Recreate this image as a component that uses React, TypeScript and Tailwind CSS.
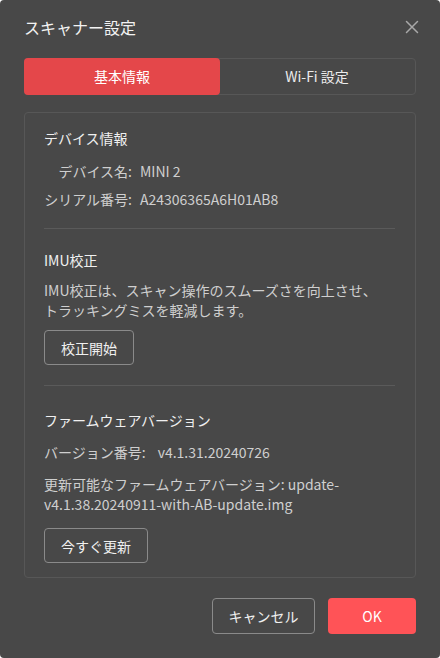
import React from "react";

const font = { fontFamily: '"Noto Sans CJK JP", "Noto Sans", sans-serif' };

export default function App() {
  return (
    <div className="w-[440px] h-[658px] bg-[#484848] rounded-[4px] overflow-hidden flex flex-col px-6" style={font}>
      <div className="h-[52px] flex items-center justify-between pt-[1px]">
        <div className="text-[16px] text-[#f2f2f2]">スキャナー設定</div>
        <svg width="14" height="14" viewBox="0 0 14 14" className="mr-[-3px]">
          <path d="M1.5 1.5 L12.5 12.5 M12.5 1.5 L1.5 12.5" stroke="#a8a8a8" strokeWidth="1.5" strokeLinecap="round" />
        </svg>
      </div>
      <div className="mt-[6px] h-[37px] flex border border-[#575757] rounded-[4px] box-border">
        <div className="w-[196px] -m-px h-[37px] bg-[#e4474a] rounded-[4px] flex items-center justify-center text-[14px] text-white">基本情報</div>
        <div className="flex-1 flex items-center justify-center text-[14px] text-[#ececec]">Wi-Fi 設定</div>
      </div>
      <div className="mt-[17px] h-[466px] border border-[#575757] rounded-[4px] pl-[19px] pr-5 pt-[15px] flex flex-col text-[14px] leading-[20px]">
        <div className="text-[#f0f0f0]">デバイス情報</div>
        <div className="mt-[13px] flex text-[#cfcfcf]">
          <span className="w-[88px] text-right">デバイス名:</span>
          <span className="ml-[8px]">MINI 2</span>
        </div>
        <div className="mt-[8px] flex text-[#cfcfcf]">
          <span className="w-[88px] text-right">シリアル番号:</span>
          <span className="ml-[8px]">A24306365A6H01AB8</span>
        </div>
        <div className="mt-[19px] h-px bg-[#5a5a5a]" />
        <div className="mt-[21px] text-[#f0f0f0]">IMU校正</div>
        <div className="mt-[10px] text-[#cfcfcf]">IMU校正は、スキャン操作のスムーズさを向上させ、<br />トラッキングミスを軽減します。</div>
        <div className="mt-[10px]">
          <button className="h-[35px] w-[90px] border border-[#8a8a8a] rounded-[4px] text-[#f0f0f0] text-[14px]">校正開始</button>
        </div>
        <div className="mt-[20px] h-px bg-[#5a5a5a]" />
        <div className="mt-[24px] text-[#f0f0f0]">ファームウェアバージョン</div>
        <div className="mt-[12px] text-[#cfcfcf] flex">
          <span>バージョン番号:</span>
          <span className="ml-[12px]">v4.1.31.20240726</span>
        </div>
        <div className="mt-[12px] text-[#cfcfcf]">更新可能なファームウェアバージョン: update-<br />v4.1.38.20240911-with-AB-update.img</div>
        <div className="mt-[14px]">
          <button className="h-[35px] w-[104px] border border-[#8a8a8a] rounded-[4px] text-[#f0f0f0] text-[14px]">今すぐ更新</button>
        </div>
      </div>
      <div className="mt-[20px] flex justify-end gap-[13px]">
        <button className="h-[36px] w-[103px] border border-[#8a8a8a] rounded-[4px] text-[#f0f0f0] text-[14px]">キャンセル</button>
        <button className="h-[36px] w-[88px] bg-[#ff5357] rounded-[4px] text-white text-[14px]">OK</button>
      </div>
    </div>
  );
}
